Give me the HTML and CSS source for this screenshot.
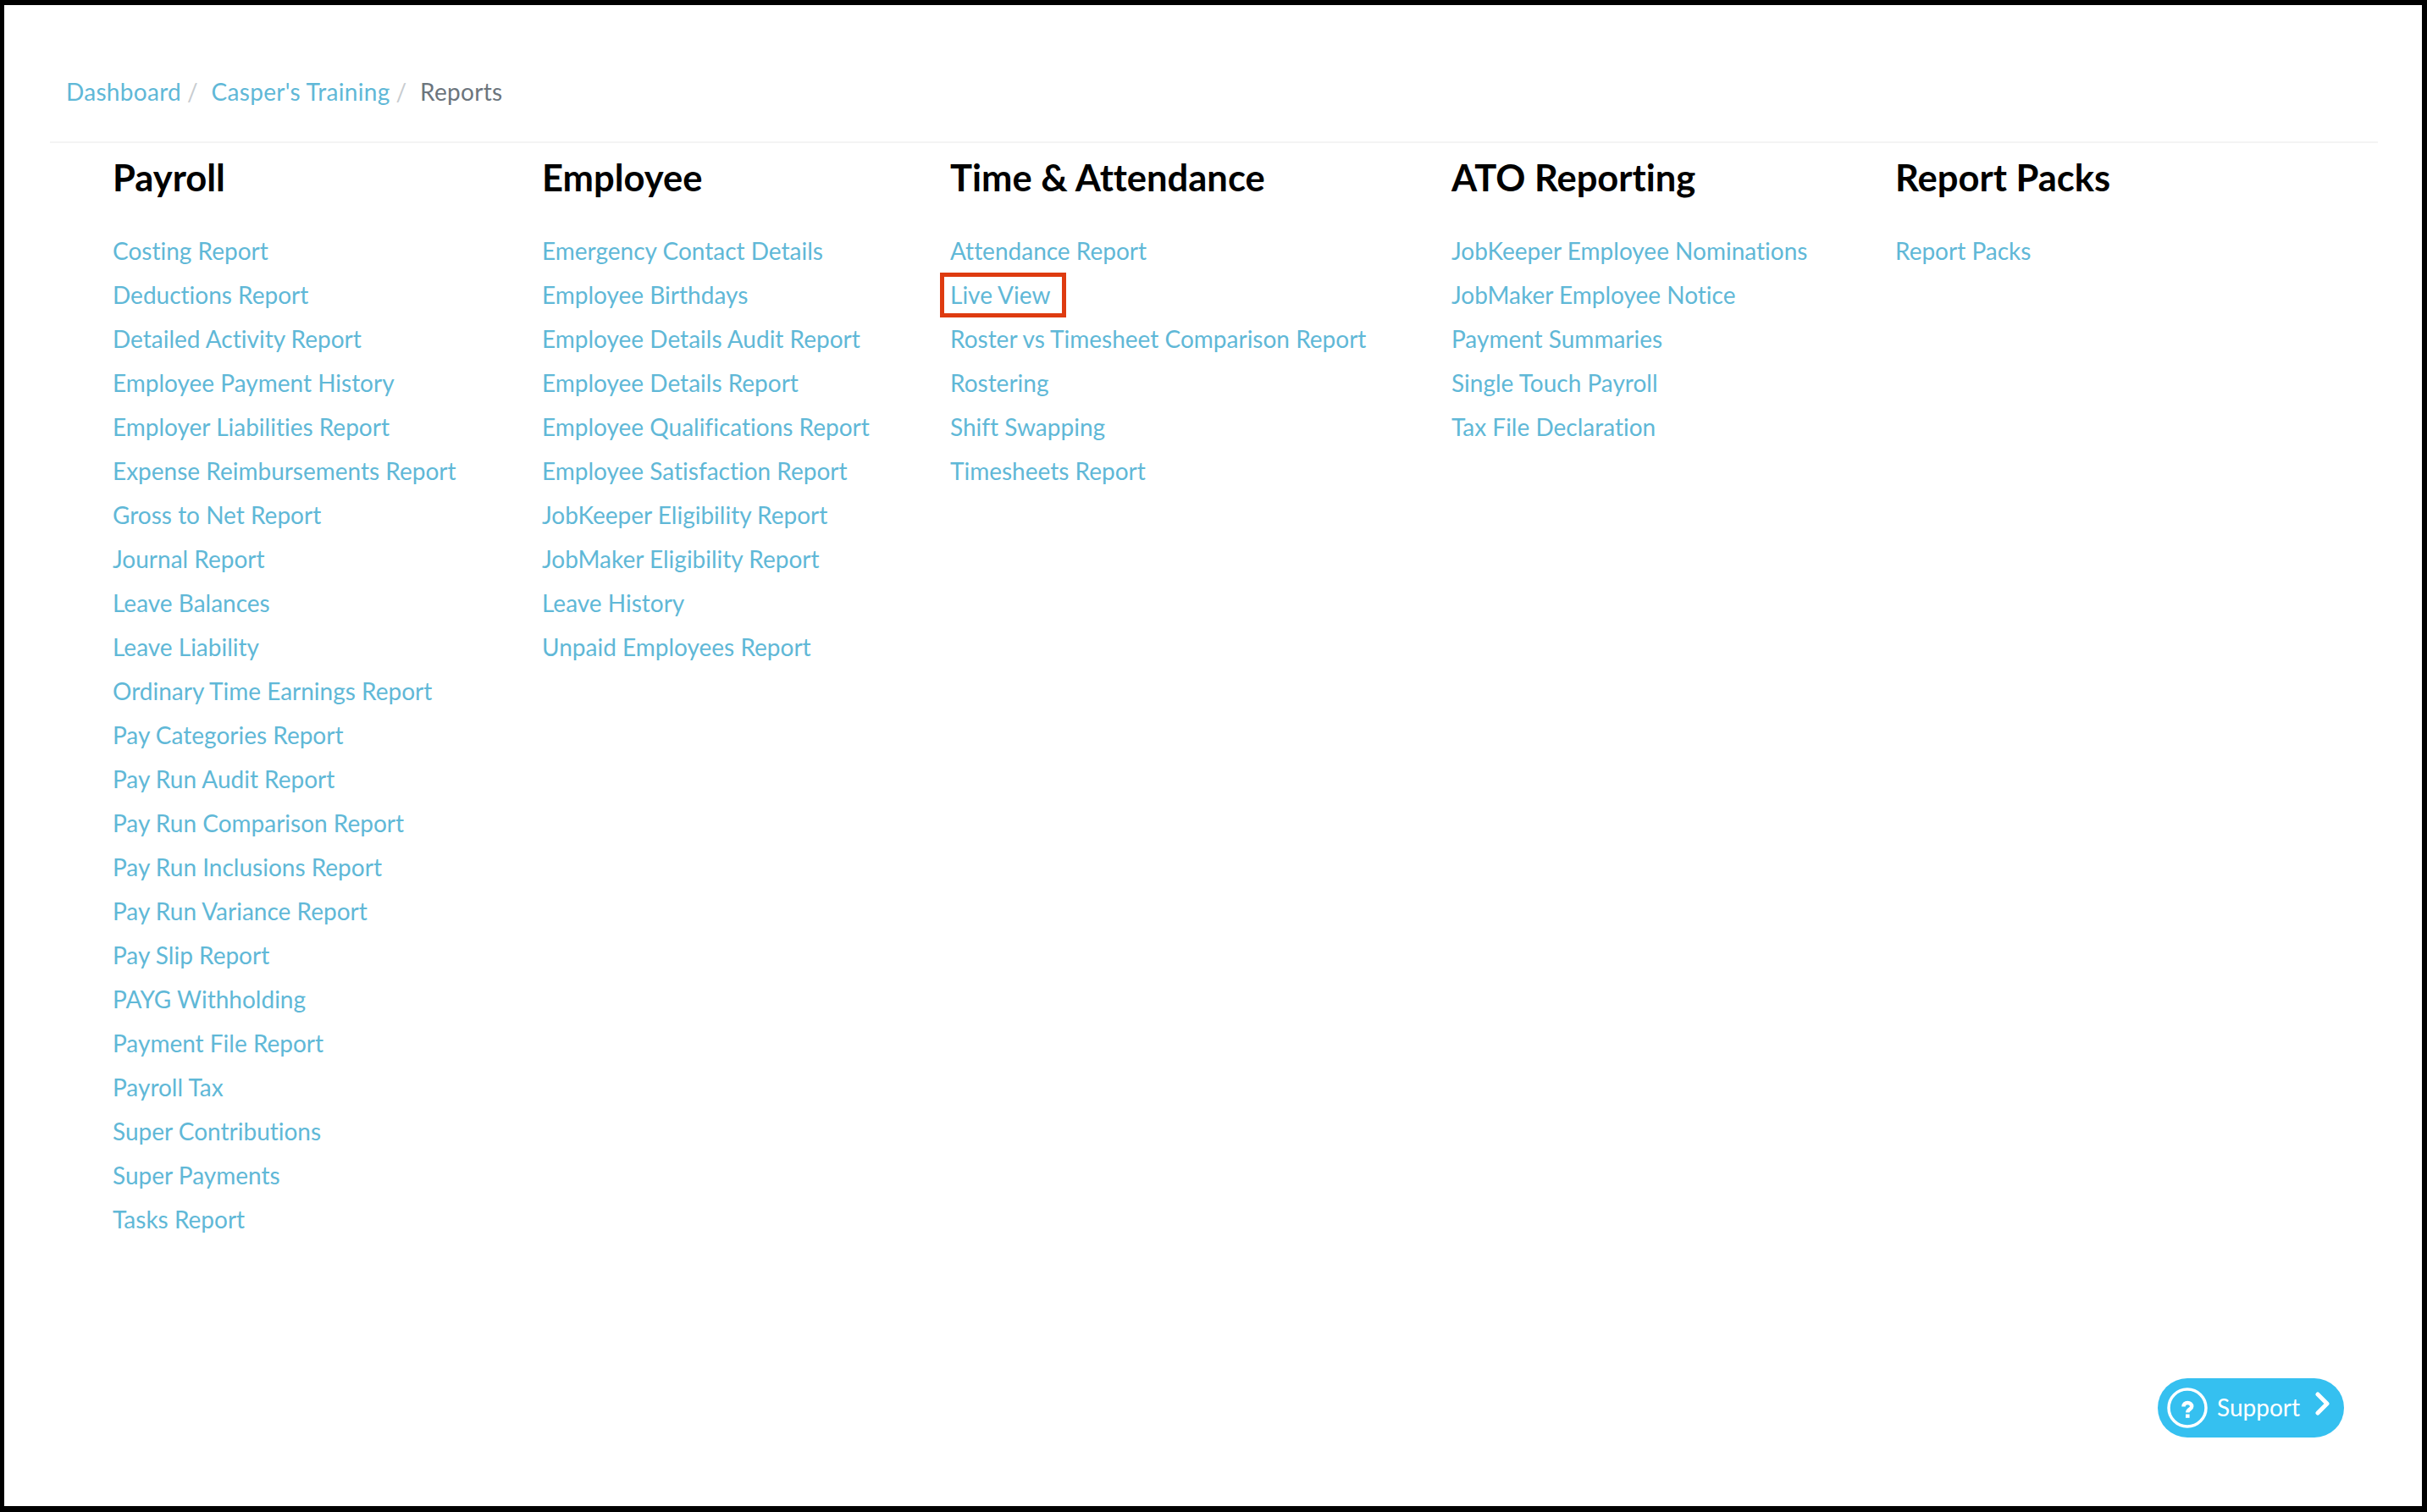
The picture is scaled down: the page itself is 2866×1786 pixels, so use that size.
FILE: index.html
```html
<!DOCTYPE html>
<html lang="en">
<head>
    <meta charset="UTF-8">
    <meta name="viewport" content="width=device-width, initial-scale=1.0">
    <title>Reports</title>
    <link rel="stylesheet" href="styles.css">
</head>
<body>
    <div class="page">
        <nav class="breadcrumb">
            <a href="#">Dashboard</a><span class="sep">/</span>
            <a href="#">Casper's Training</a><span class="sep">/</span>
            <span class="current">Reports</span>
        </nav>
        <div class="report-grid">
            <section class="report-col">
                <h2>Payroll</h2>
                <ul>
                    <li><a href="#">Costing Report</a></li>
                    <li><a href="#">Deductions Report</a></li>
                    <li><a href="#">Detailed Activity Report</a></li>
                    <li><a href="#">Employee Payment History</a></li>
                    <li><a href="#">Employer Liabilities Report</a></li>
                    <li><a href="#">Expense Reimbursements Report</a></li>
                    <li><a href="#">Gross to Net Report</a></li>
                    <li><a href="#">Journal Report</a></li>
                    <li><a href="#">Leave Balances</a></li>
                    <li><a href="#">Leave Liability</a></li>
                    <li><a href="#">Ordinary Time Earnings Report</a></li>
                    <li><a href="#">Pay Categories Report</a></li>
                    <li><a href="#">Pay Run Audit Report</a></li>
                    <li><a href="#">Pay Run Comparison Report</a></li>
                    <li><a href="#">Pay Run Inclusions Report</a></li>
                    <li><a href="#">Pay Run Variance Report</a></li>
                    <li><a href="#">Pay Slip Report</a></li>
                    <li><a href="#">PAYG Withholding</a></li>
                    <li><a href="#">Payment File Report</a></li>
                    <li><a href="#">Payroll Tax</a></li>
                    <li><a href="#">Super Contributions</a></li>
                    <li><a href="#">Super Payments</a></li>
                    <li><a href="#">Tasks Report</a></li>
                </ul>
            </section>
            <section class="report-col">
                <h2>Employee</h2>
                <ul>
                    <li><a href="#">Emergency Contact Details</a></li>
                    <li><a href="#">Employee Birthdays</a></li>
                    <li><a href="#">Employee Details Audit Report</a></li>
                    <li><a href="#">Employee Details Report</a></li>
                    <li><a href="#">Employee Qualifications Report</a></li>
                    <li><a href="#">Employee Satisfaction Report</a></li>
                    <li><a href="#">JobKeeper Eligibility Report</a></li>
                    <li><a href="#">JobMaker Eligibility Report</a></li>
                    <li><a href="#">Leave History</a></li>
                    <li><a href="#">Unpaid Employees Report</a></li>
                </ul>
            </section>
            <section class="report-col">
                <h2>Time &amp; Attendance</h2>
                <ul>
                    <li><a href="#">Attendance Report</a></li>
                    <li><a href="#" class="highlight">Live View</a></li>
                    <li><a href="#">Roster vs Timesheet Comparison Report</a></li>
                    <li><a href="#">Rostering</a></li>
                    <li><a href="#">Shift Swapping</a></li>
                    <li><a href="#">Timesheets Report</a></li>
                </ul>
            </section>
            <section class="report-col">
                <h2>ATO Reporting</h2>
                <ul>
                    <li><a href="#">JobKeeper Employee Nominations</a></li>
                    <li><a href="#">JobMaker Employee Notice</a></li>
                    <li><a href="#">Payment Summaries</a></li>
                    <li><a href="#">Single Touch Payroll</a></li>
                    <li><a href="#">Tax File Declaration</a></li>
                </ul>
            </section>
            <section class="report-col">
                <h2>Report Packs</h2>
                <ul>
                    <li><a href="#">Report Packs</a></li>
                </ul>
            </section>
        </div>
        <a href="#" class="support">
            <svg class="support-help" width="48" height="48" viewBox="0 0 48 48">
                <circle cx="24" cy="24" r="22" fill="none" stroke="#fff" stroke-width="3.5"/>
                <path d="M19.500 22.500c0-2.800 2-4.500 4.800-4.500s4.900 1.700 4.900 4.200c0 3.600-4.900 3.400-4.900 7.300" fill="none" stroke="#fff" stroke-width="4.500"/>
                <rect x="22" y="31.500" width="4.600" height="4.300" fill="#fff"/>
            </svg>
            <span class="support-label">Support</span>
            <svg class="support-chevron" width="18" height="28" viewBox="0 0 18 28">
                <path d="M3 3l11 11L3 25" fill="none" stroke="#fff" stroke-width="5" stroke-linecap="round" stroke-linejoin="round"/>
            </svg>
        </a>
    </div>
</body>
</html>
```

FILE: styles.css
```css
* {
    box-sizing: border-box;
}
html, body {
    margin: 0;
    height: 100%;
}
body {
    font-family: Lato, "Open Sans", Arial, sans-serif;
    font-variant-ligatures: none;
    background-color: #000;
    padding: 6px 6px 7px 5px;
}
.page {
    position: relative;
    height: 100%;
    background: #fff;
    padding: 0 52px 0 54px;
    overflow: hidden;
}
a {
    color: #60b8d7;
    text-decoration: none;
}
.breadcrumb {
    height: 163px;
    padding: 84px 0 0 19px;
    border-bottom: 2px solid #f4f4f4;
    font-size: 28px;
    line-height: 36px;
    letter-spacing: 0.3px;
}
.breadcrumb .sep {
    color: #c8ccd0;
    margin: 0 8px 0 7px;
}
.breadcrumb .current {
    color: #6c757d;
}
.report-grid {
    display: grid;
    grid-template-columns: 507px 482px 592px 524px 1fr;
    padding-left: 74px;
}
.report-col h2 {
    margin: 0;
    padding-top: 13px;
    height: 101px;
    font-size: 43.5px;
    line-height: 54px;
    font-weight: 700;
    color: #000;
}
.report-col ul {
    list-style: none;
    margin: 0;
    padding: 0;
}
.report-col li {
    height: 52px;
    font-size: 28px;
    line-height: 52px;
}
.highlight {
    position: relative;
    display: inline-block;
}
.highlight::after {
    content: "";
    position: absolute;
    top: 0;
    bottom: -1px;
    left: -12px;
    right: -19px;
    border: 5px solid #de3b10;
}
.support {
    position: absolute;
    left: 2543px;
    top: 1622px;
    width: 220px;
    height: 70px;
    display: flex;
    align-items: center;
    padding-left: 11px;
    border-radius: 35px;
    background: #35c0f0;
    color: #fff;
}
.support-label {
    font-size: 28px;
    margin: 0 0 3px 11px;
}
.support-chevron {
    margin-left: 18px;
    margin-bottom: 10px;
}
```
